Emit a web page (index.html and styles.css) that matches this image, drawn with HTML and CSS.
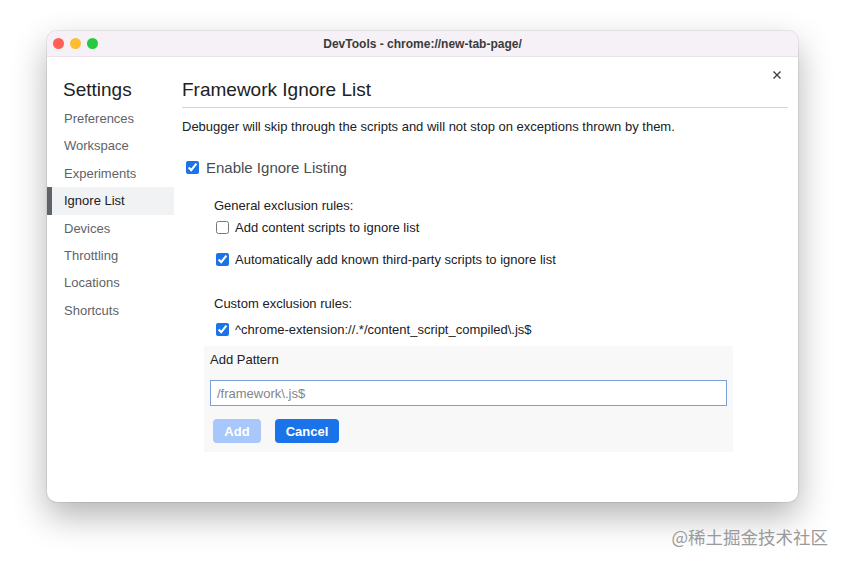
FILE: index.html
```html
<!DOCTYPE html>
<html lang="en">
<head>
    <meta charset="UTF-8">
    <title>DevTools - Settings</title>
    <link rel="stylesheet" href="styles.css">
</head>
<body>
<div class="stage">
    <div class="window">
        <div class="titlebar">
            <div class="lights">
                <span class="light red"></span>
                <span class="light yellow"></span>
                <span class="light green"></span>
            </div>
            <div class="title">DevTools - chrome://new-tab-page/</div>
        </div>
        <div class="body">
            <button class="close-button" aria-label="Close">
                <svg width="10" height="10" viewBox="0 0 10 10"><path d="M1.5 1.5 L8.5 8.5 M8.5 1.5 L1.5 8.5" stroke="#3c4043" stroke-width="1.4"/></svg>
            </button>
            <div class="sidebar">
                <h2 class="sidebar-title">Settings</h2>
                <ul class="nav">
                    <li class="nav-item">Preferences</li>
                    <li class="nav-item">Workspace</li>
                    <li class="nav-item">Experiments</li>
                    <li class="nav-item selected">Ignore List</li>
                    <li class="nav-item">Devices</li>
                    <li class="nav-item">Throttling</li>
                    <li class="nav-item">Locations</li>
                    <li class="nav-item">Shortcuts</li>
                </ul>
            </div>
            <div class="main">
                <h1 class="main-title">Framework Ignore List</h1>
                <p class="description">Debugger will skip through the scripts and will not stop on exceptions thrown by them.</p>

                <label class="enable-row">
                    <input type="checkbox" checked>
                    <span>Enable Ignore Listing</span>
                </label>

                <div class="rules">
                    <div class="rules-label">General exclusion rules:</div>
                    <label class="check-row">
                        <input type="checkbox">
                        <span>Add content scripts to ignore list</span>
                    </label>
                    <label class="check-row second">
                        <input type="checkbox" checked>
                        <span>Automatically add known third-party scripts to ignore list</span>
                    </label>

                    <div class="rules-label custom">Custom exclusion rules:</div>
                    <label class="check-row">
                        <input type="checkbox" checked>
                        <span>^chrome-extension://.*/content_script_compiled\.js$</span>
                    </label>
                </div>

                <div class="pattern-box">
                    <div class="pattern-label">Add Pattern</div>
                    <input class="pattern-input" type="text" placeholder="/framework\.js$">
                    <div class="pattern-buttons">
                        <button class="btn btn-add" disabled>Add</button>
                        <button class="btn btn-cancel">Cancel</button>
                    </div>
                </div>
            </div>
        </div>
    </div>
    <div class="watermark">@稀土掘金技术社区</div>
</div>
</body>
</html>
```

FILE: styles.css
```css
body {
    margin: 0;
    background-color: #ffffff;
    font-family: "Liberation Sans", Arial, sans-serif;
}

.stage {
    position: relative;
    width: 845px;
    height: 565px;
    padding: 31px 0 0 47px;
    box-sizing: border-box;
}

.window {
    width: 751px;
    height: 471px;
    border-radius: 10px;
    background-color: #ffffff;
    box-shadow: 0 14px 34px rgba(0, 0, 0, 0.3), 0 0 0 1px rgba(0, 0, 0, 0.07);
    overflow: hidden;
    display: flex;
    flex-direction: column;
}

.titlebar {
    position: relative;
    height: 25px;
    background-color: #f6f1f6;
    border-bottom: 1px solid #e8e3e8;
    display: flex;
    align-items: center;
    justify-content: center;
}

.lights {
    position: absolute;
    left: 6px;
    top: 7px;
    display: flex;
    gap: 6px;
}

.light {
    width: 11px;
    height: 11px;
    border-radius: 50%;
}

.light.red { background-color: #fe5f57; }
.light.yellow { background-color: #febc2e; }
.light.green { background-color: #28c840; }

.title {
    font-size: 12px;
    font-weight: bold;
    color: #3b3b3b;
}

.body {
    position: relative;
    flex: 1;
    display: flex;
}

.close-button {
    position: absolute;
    right: 14px;
    top: 11px;
    width: 14px;
    height: 14px;
    padding: 0;
    border: none;
    background: none;
    display: flex;
    align-items: center;
    justify-content: center;
}

.sidebar {
    width: 127px;
    padding-top: 21px;
}

.sidebar-title {
    margin: 0 0 3px 16px;
    font-size: 19px;
    line-height: 24px;
    font-weight: normal;
    color: #202124;
}

.nav {
    list-style: none;
    margin: 0;
    padding: 0;
}

.nav-item {
    height: 27.4px;
    line-height: 27.4px;
    padding-left: 12px;
    font-size: 13px;
    color: #5f6368;
    border-left: 5px solid transparent;
}

.nav-item.selected {
    background-color: #f1f2f4;
    border-left-color: #5f6368;
    color: #202124;
}

.main {
    flex: 1;
    padding: 21px 10px 0 8px;
}

.main-title {
    margin: 0;
    padding-bottom: 5px;
    font-size: 19px;
    line-height: 24px;
    font-weight: normal;
    color: #202124;
    border-bottom: 1px solid #d3d5d8;
}

.description {
    margin: 11px 0 0;
    font-size: 13px;
    line-height: 16px;
    color: #202124;
}

.enable-row {
    display: flex;
    align-items: center;
    height: 20px;
    margin-top: 22px;
    font-size: 15px;
    color: #4a4d51;
}

input[type="checkbox"] {
    width: 13px;
    height: 13px;
    margin: 0 7px 0 4px;
    accent-color: #1a73e8;
}

.rules {
    padding-left: 32px;
}

.rules-label {
    margin-top: 21px;
    font-size: 13px;
    line-height: 16px;
    color: #202124;
}

.rules-label.custom {
    margin-top: 27px;
}

.check-row {
    display: flex;
    align-items: center;
    height: 20px;
    margin-top: 3px;
    font-size: 13px;
    color: #202124;
}

.check-row input[type="checkbox"] {
    margin: 0 6px 0 2px;
}

.check-row.second {
    margin-top: 12px;
}

.rules-label.custom + .check-row {
    margin-top: 7px;
}

.pattern-box {
    width: 517px;
    margin: 7px 0 0 22px;
    padding: 6px 6px 9px;
    background-color: #f8f8f9;
}

.pattern-label {
    font-size: 13px;
    line-height: 16px;
    color: #202124;
}

.pattern-input {
    display: block;
    box-sizing: border-box;
    width: 100%;
    height: 26px;
    margin-top: 12px;
    padding: 0 6px;
    border: 1px solid #7b9fd8;
    background-color: #ffffff;
    font-family: "Liberation Sans", Arial, sans-serif;
    font-size: 13px;
    outline: none;
}

.pattern-input::placeholder {
    color: #80868b;
}

.pattern-buttons {
    display: flex;
    gap: 14px;
    margin-top: 13px;
    padding-left: 3px;
}

.btn {
    height: 24px;
    border: none;
    border-radius: 4px;
    font-family: "Liberation Sans", Arial, sans-serif;
    font-size: 13px;
    font-weight: bold;
    color: #ffffff;
    padding: 0;
}

.btn-add {
    width: 48px;
    background-color: #a8c7fa;
}

.btn-cancel {
    width: 64px;
    background-color: #1a73e8;
}

.watermark {
    position: absolute;
    right: 17px;
    bottom: 16px;
    font-family: "Noto Sans CJK SC", sans-serif;
    font-size: 17.5px;
    color: #9a9a9a;
}
```
